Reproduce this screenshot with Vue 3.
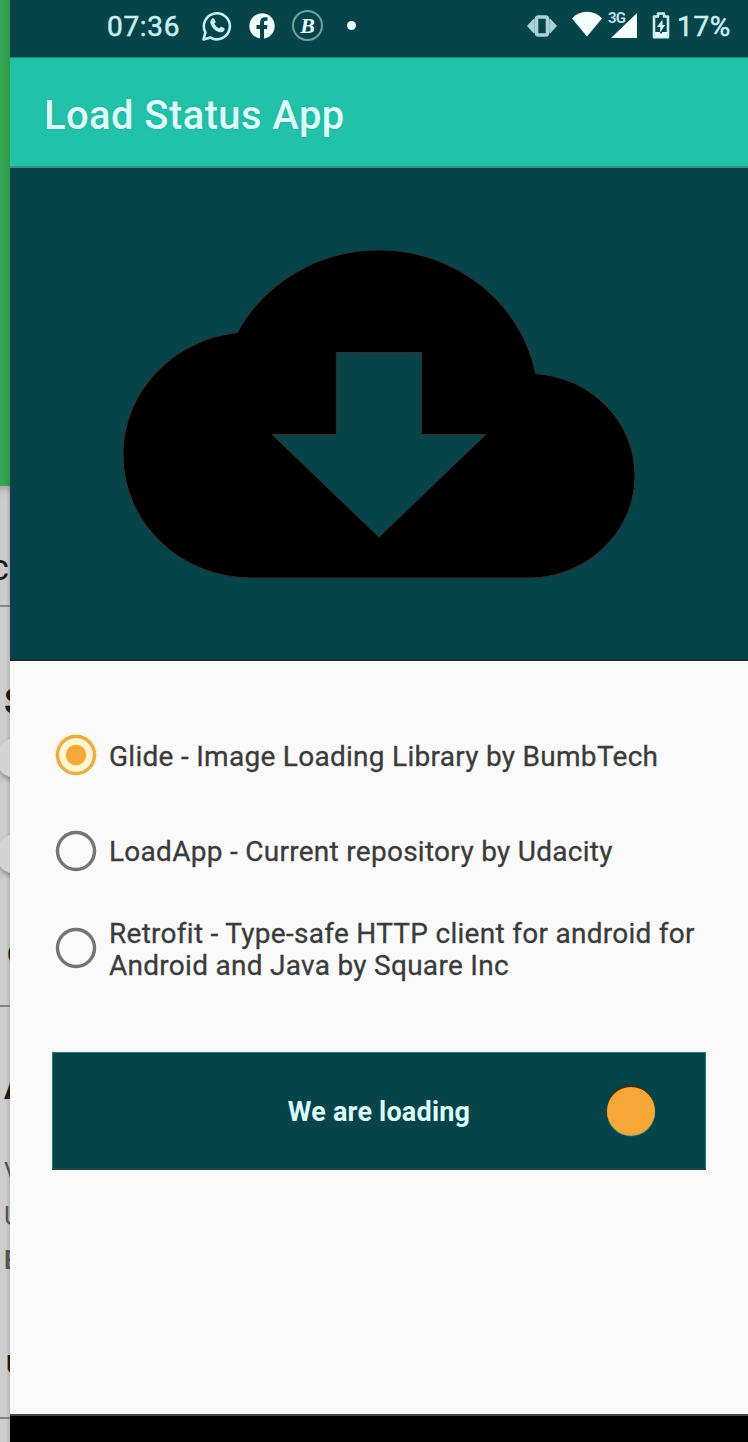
<script setup>
const options = [
  { label: 'Glide - Image Loading Library by BumbTech', checked: true },
  { label: 'LoadApp - Current repository by Udacity', checked: false },
  { label: 'Retrofit - Type-safe HTTP client for android for Android and Java by Square Inc', checked: false }
]
</script>

<template>
  <div class="screen">
    <aside class="behind">
      <div class="green"></div>
      <section class="panel p1"><span class="t-c">c</span></section>
      <section class="panel p2">
        <b class="t-s">S</b>
        <i class="knob k1"></i>
        <i class="knob k2"></i>
        <span class="t-o">O</span>
      </section>
      <section class="panel p3">
        <b class="t-a">A</b>
        <span class="t-v">V</span>
        <span class="t-u">U</span>
        <b class="t-e">E</b>
        <span class="t-u2">U</span>
      </section>
      <section class="panel p4"></section>
    </aside>

    <main class="phone">
      <header class="status">
        <span class="time">07:36</span>
        <svg class="ic wa" viewBox="0 0 30 30" width="30" height="30">
          <path d="M1.5 28.5 3.4 21.4A13 13 0 1 1 8.5 26.6Z" fill="none" stroke="#c3f0f2" stroke-width="2.6" stroke-linejoin="round" />
          <path d="M10.2 7.6c.8-.5 1.8-.4 2.2.4l1.2 2.6c.3.7-.8 1.8-1.2 2.2 1 2.2 2.6 3.6 4.8 4.5.5-.5 1.5-1.9 2.2-1.6l2.6 1.3c.8.4.7 1.5.2 2.4-1 1.8-3.2 2.3-5.3 1.6-4.3-1.4-7.1-4.2-8.4-8.2-.6-2 .1-4.2 1.7-5.2Z" fill="#c3f0f2" />
        </svg>
        <svg class="ic fb" viewBox="0 0 26 26" width="26" height="26">
          <circle cx="13" cy="13" r="12.7" fill="#f4ffff" />
          <path d="M11 26V16H7.5v-4H11V9.5C11 6 13 4.2 16 4.2c1.3 0 2.5.2 2.5.2v3.3h-1.6c-1.5 0-1.9.9-1.9 1.9V12h3.5l-.6 4H15v10Z" fill="#06444a" />
        </svg>
        <span class="coin">B</span>
        <i class="dot"></i>
        <svg class="ic vib" viewBox="0 0 30 24" width="30" height="24">
          <path d="M7 5.5 1 12l6 6.5ZM23 5.5 29 12l-6 6.5Z" fill="#a9d3d6" stroke="#a9d3d6" stroke-width="1.5" stroke-linejoin="round" />
          <rect x="9.5" y="3" width="11" height="18" rx="2" fill="#06444a" stroke="#a9d3d6" stroke-width="3.6" />
        </svg>
        <svg class="ic wifi" viewBox="0 0 32 26" width="32" height="26">
          <path d="M16 25.5 1 7.5C5 3 10 .8 16 .8S27 3 31 7.5Z" fill="#f6ffff" />
        </svg>
        <div class="cell">
          <svg viewBox="0 0 26 25" width="26" height="25"><path d="M0 25 26 0v25Z" fill="#f6ffff" /></svg>
          <span>3G</span>
        </div>
        <svg class="ic bat" viewBox="0 0 18 27" width="18" height="27">
          <path d="M6 1.5h6v3h4v20.800H2V4.5h4Z" fill="#06444a" stroke="#c9eef0" stroke-width="2.6" stroke-linejoin="round" />
          <path d="M3 20h4.5l1.5 2 1.5-2H15v5H3Z" fill="#e4ffff" />
          <path d="M10.5 7.5 5 15h3.2v5.5L13 13H10.5Z" fill="#d9f8fa" />
        </svg>
        <span class="pct">17%</span>
      </header>

      <div class="appbar"><h1>Load Status App</h1></div>

      <div class="hero">
        <svg viewBox="0 0 24 24" width="512" height="492" preserveAspectRatio="none">
          <path fill-rule="evenodd" stroke="#352f2e" stroke-width=".05" d="M19.35 10.04C18.67 6.59 15.64 4 12 4 9.11 4 6.6 5.64 5.35 8.04 2.34 8.36 0 10.91 0 14c0 3.31 2.69 6 6 6h13c2.76 0 5-2.24 5-5 0-2.64-2.05-4.78-4.65-4.96ZM17 13l-5 5-5-5h3V9h4v4h3Z" />
        </svg>
      </div>

      <div class="content">
        <div class="options">
          <label v-for="o in options" :key="o.label" class="option">
            <svg class="radio" viewBox="0 0 48 48" width="48" height="48">
              <template v-if="o.checked">
                <circle cx="24" cy="23.5" r="20.5" fill="#ffeb9c" class="glow" />
                <circle cx="24" cy="24" r="18.5" fill="#fff8cf" stroke="#e9ab4e" stroke-width="3.4" />
                <circle cx="24" cy="24" r="10.3" fill="#f7a638" />
              </template>
              <circle v-else cx="24" cy="24" r="18.5" fill="none" stroke="#747474" stroke-width="3.4" />
            </svg>
            <span class="label">{{ o.label }}</span>
          </label>
        </div>
        <div class="button">
          <span class="btn-text">We are loading</span>
          <i class="spinner"></i>
        </div>
      </div>
      <footer class="nav"></footer>
    </main>
  </div>
</template>

<style>
body { margin: 0; overflow: hidden; }
</style>

<style scoped>
* { box-sizing: border-box; }
.screen { display: flex; width: 748px; height: 1442px; overflow: hidden; font-family: Roboto, "Liberation Sans", sans-serif; }

.behind { flex: none; width: 10px; overflow: hidden; line-height: 1; color: #191919; background: #cbcbcb; }
.green { height: 486px; background: linear-gradient(90deg, #37a852, #319848); }
.panel { display: flex; flex-direction: column; align-items: flex-start; overflow: hidden; background: linear-gradient(90deg, #cdcdcd 60%, #b5b5b5); border-bottom: 2px solid #858585; }
.panel > * { flex: none; }
.p1 { height: 121px; box-shadow: inset 0 8px 8px -5px rgba(0,0,0,.22); }
.p2 { height: 400px; }
.p3 { height: 412px; }
.p4 { height: 23px; border: 0; }
.t-c { font-size: 36px; margin: 64px 0 0 -10px; }
.t-s { font-size: 36px; margin: 77px 0 0 4px; }
.knob { width: 40px; height: 40px; border-radius: 50%; background: #d3d3d3; box-shadow: 0 3px 5px rgba(0,0,0,.3); margin-left: -4px; }
.k1 { margin-top: 18px; }
.k2 { margin-top: 56px; }
.t-o { font-size: 28px; font-weight: 500; margin: 67px 0 0 7px; }
.t-a { font-size: 36px; margin: 62px 0 0 4px; }
.t-v, .t-u, .t-e { font-size: 26px; color: #555; }
.t-v { margin: 54px 0 0 4px; }
.t-u { margin: 18px 0 0 4px; }
.t-e { margin: 18px 0 0 4px; }
.t-u2 { font-size: 26px; font-weight: 500; margin: 79px 0 0 6px; }

.phone { flex: none; width: 738px; display: flex; flex-direction: column; background: #fafafa; }

.status { height: 57px; padding: 0 0 6px 97px; background: #06444a; display: flex; align-items: center; color: #c9eff1; }
.status > * { flex: none; }
.time { width: 95px; font-size: 28px; line-height: 50px; letter-spacing: .7px; white-space: nowrap; padding-top: 2px; -webkit-text-stroke: .5px; }
.wa { margin-right: 17px; }
.fb { margin-right: 17px; }
.coin { width: 31px; height: 31px; border: 2px solid #6fa2a6; border-radius: 50%; text-align: center; font: italic 700 22px/27px "Liberation Serif", serif; color: #e3feff; margin-right: 24px; }
.dot { width: 9px; height: 9px; border-radius: 50%; background: #e6ffff; margin-right: 171px; }
.vib { margin-right: 14px; }
.wifi { margin-right: 5px; margin-top: -3px; }
.cell { position: relative; width: 30px; height: 25px; padding-left: 3px; margin-right: 14px; }
.cell svg { display: block; }
.cell span { position: absolute; left: 0; top: -2px; font-size: 15px; line-height: 14px; font-weight: 700; color: #b9dfe1; letter-spacing: -.8px; }
.bat { margin-right: 7px; }
.pct { font-size: 28px; line-height: 50px; padding-top: 2px; white-space: nowrap; letter-spacing: .7px; -webkit-text-stroke: .5px; }

.appbar { height: 111px; background: #22c1aa; border-top: 1px solid #158376; border-bottom: 2px solid #3c8f8b; padding-left: 34px; display: flex; align-items: center; }
h1 { margin: 8px 0 0; font-size: 40px; line-height: 46px; font-weight: 500; letter-spacing: .4px; color: #d9fffb; text-shadow: 0 0 2px rgba(80,120,120,.6); white-space: nowrap; }

.hero { height: 493px; background: #06444a; border-bottom: 2px solid #183437; display: flex; justify-content: center; align-items: flex-start; }
.hero svg { display: block; flex: none; }

.content { height: 753px; padding: 46px 42px 0; }
.options { display: flex; flex-direction: column; }
.option { height: 96px; display: flex; align-items: center; }
.option:nth-child(2) { height: 95px; }
.option:last-child { height: 99px; }
.radio { flex: none; display: block; overflow: visible; }
.glow { filter: blur(1.5px); }
.label { flex: none; width: 610px; margin-left: 9px; padding-top: 3px; font-size: 28px; line-height: 32px; letter-spacing: .28px; color: #3b3b3b; -webkit-text-stroke: .3px; }
.option:last-child .label { padding-top: 5px; }

.button { height: 118px; margin-top: 55px; background: #06444a; border: 1px solid #3d7378; border-bottom: 2px solid #244148; box-shadow: 0 0 3px #d5f4f5; display: grid; grid-template-columns: 1fr auto 1fr; align-items: center; }
.btn-text { grid-column: 2; padding-top: 2px; font-size: 27px; line-height: 34px; font-weight: 700; letter-spacing: .2px; color: #dcfbfc; white-space: nowrap; }
.spinner { width: 48px; height: 48px; justify-self: end; margin-right: 50px; border-radius: 50%; background: #f7a638; box-shadow: 0 -2px 1px #3d3013, 0 1px 1px #9db681; }

.nav { height: 28px; background: #000; border-top: 2px solid #444; }
</style>
